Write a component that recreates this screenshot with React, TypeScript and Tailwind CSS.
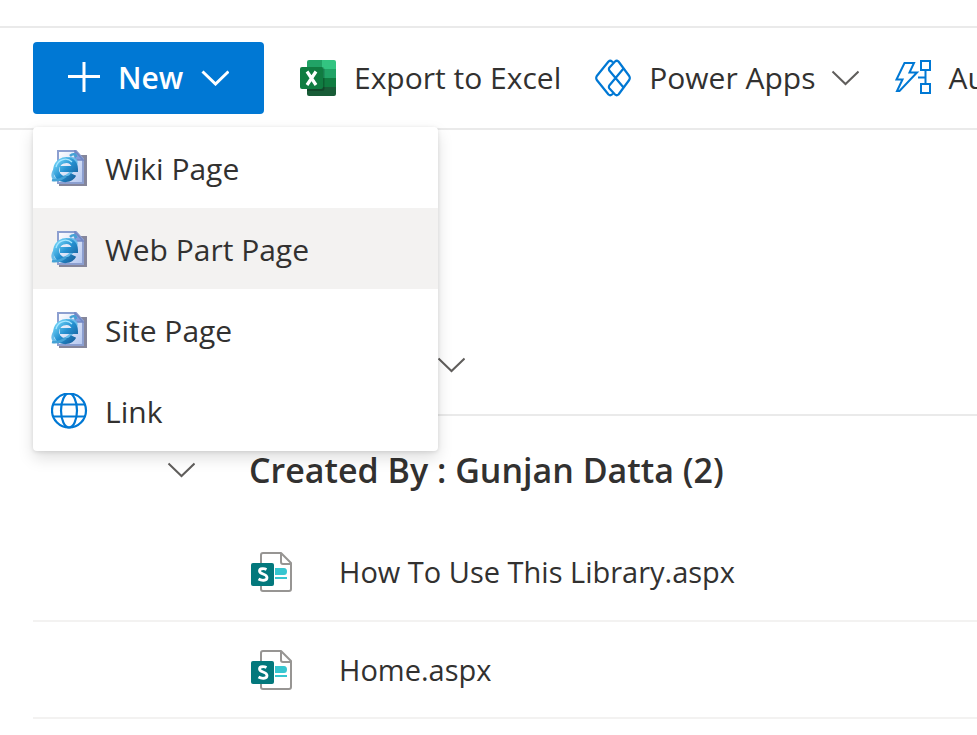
import type { ReactNode } from 'react';

function Chevron({ className = '' }: { className?: string }) {
  return (
    <svg className={className} width="28" height="16" viewBox="0 0 28 16" fill="none" stroke="currentColor" aria-hidden="true">
      <path d="M1.500 1.500 14.500 14 27.500 1.500" />
    </svg>
  );
}

function PlusIcon() {
  return (
    <svg width="32" height="32" viewBox="0 0 32 32" fill="none" stroke="currentColor" strokeWidth="3" aria-hidden="true">
      <path d="M16 0v30M0 14.500h32" />
    </svg>
  );
}

function ExcelIcon() {
  return (
    <svg width="36" height="36" viewBox="0 0 36 36" aria-hidden="true">
      <clipPath id="sheet"><rect x="7" width="29" height="36" rx="2" /></clipPath>
      <g clipPath="url(#sheet)">
        <path fill="#21a366" d="M7 0h15v9H7z" />
        <path fill="#33c481" d="M22 0h14v9H22z" />
        <path fill="#107c41" d="M7 9h15v9H7z" />
        <path fill="#21a366" d="M22 9h14v9H22z" />
        <path fill="#185c37" d="M7 18h15v18H7z" />
        <path fill="#107c41" d="M22 18h14v9H22z" />
        <path fill="#185c37" d="M22 27h14v9H22z" />
        <path fill="#000" opacity=".22" d="M7 7h15q2.500 0 2.500 2.500V28.500q0 2.500-2.500 2.500H7z" />
      </g>
      <rect y="7" width="23" height="22" rx="2" fill="#107c41" />
      <path d="m7 11.500 9 13.500M16 11.500 7 25" stroke="#fff" strokeWidth="3.200" />
    </svg>
  );
}

function PowerAppsIcon() {
  return (
    <svg width="36" height="38" viewBox="0 0 36 38" fill="none" stroke="#0078d4" strokeWidth="2.200" strokeLinejoin="round" aria-hidden="true">
      <path d="M18 3.500 17 2.500Q15.200 1 13.500 2.500L1.800 17Q.600 19 1.800 21l11.700 14.500q1.700 1.500 3.500 0L18 34.500" />
      <path d="M20 2.500q1.700-1.500 3.500 0L34.200 17q1.200 2 0 4L23.500 35.500q-1.800 1.500-3.500 0L14.500 29.500q-1.200-1.500 0-3.300L28.500 9.500M20 2.500 14.500 8.500q-1.200 1.500 0 3.300L28.500 28.500" />
    </svg>
  );
}

function AutomateIcon() {
  return (
    <svg width="37" height="36" viewBox="0 0 37 36" fill="none" stroke="#0078d4" strokeWidth="2" aria-hidden="true">
      <path d="M9.500 3H19l-4.500 9.500H22L4.500 31H2l5.500-11.500H1.500Z" />
      <path d="M26 1h9v9h-9zM26 24h9v9h-9zM30.500 10v14M23 17.500h7.500" />
    </svg>
  );
}

function WebPageIcon() {
  return (
    <svg width="38" height="38" viewBox="0 0 38 38" aria-hidden="true">
      <defs>
        <linearGradient id="paper" x1="0" y1="0" x2="1" y2="1">
          <stop stopColor="#fff" /><stop offset="1" stopColor="#b3c6ef" />
        </linearGradient>
        <linearGradient id="explorer" x1="0" y1="0" x2="1" y2="1">
          <stop stopColor="#72d5f8" /><stop offset=".5" stopColor="#2590d0" /><stop offset="1" stopColor="#17629e" />
        </linearGradient>
      </defs>
      <path fill="#85869b" d="M8 5h28v31H8z" />
      <path fill="url(#paper)" stroke="#8c9fd0" strokeWidth="2" d="M7 1h18l7 8v24H7z" />
      <path fill="#819ddd" stroke="#7187c4" strokeWidth="1.500" d="M24 1v9h8Z" />
      <ellipse cx="13.500" cy="19" rx="14" ry="7" transform="rotate(-40 13.500 19)" fill="none" stroke="#68bce9" strokeWidth="3" />
      <path fill="none" stroke="url(#explorer)" strokeWidth="6" d="M22.500 24.500c-3 6-12 6-15.500 1-4-6-1-13 5-15 7-2 12 2 12 8.500H9" />
      <path fill="none" stroke="#a6e6ff" strokeWidth="1.200" d="M5 17c2-8 11-10 16-5" />
      <path fill="none" stroke="#45a2d5" strokeWidth="2.500" d="M1 30c5 1 10-1 14-4M19 6c3-3 6-2 6 1" />
    </svg>
  );
}

function LinkIcon() {
  return (
    <svg width="38" height="38" viewBox="0 1 38 38" fill="none" stroke="#0078d4" strokeWidth="2.200" aria-hidden="true">
      <circle cx="18" cy="18.500" r="17" />
      <ellipse cx="18" cy="18.500" rx="8" ry="17" />
      <path d="M2 12.500h32M2 24.500h32" />
    </svg>
  );
}

function SharePointFileIcon() {
  return (
    <svg width="42" height="42" viewBox="0 0 42 42" aria-hidden="true">
      <path fill="#fff" stroke="#979593" strokeWidth="2" strokeLinejoin="round" d="M12 2h18l10 10v26q0 2-2 2H12q-2 0-2-2V4q0-2 2-2Z" />
      <path fill="none" stroke="#979593" strokeWidth="2" d="M30 2v9q0 2 2 2h8" />
      <path fill="#37c6d0" d="M24 17h9q3 0 3 3.500T33 24h-9zM24 26h12v2H24z" />
      <rect y="12" width="23" height="23" rx="2" fill="#03787c" />
      <path fill="none" stroke="#fff" strokeWidth="2.800" d="M15.500 18.500c-2-1-7-1.500-7 1.500 0 3.500 7.500 2.500 7.500 6.500 0 3.500-5.500 3.300-8.500 1.500" />
    </svg>
  );
}

function MenuItem({ icon, label, active = false }: { icon: ReactNode; label: string; active?: boolean }) {
  return (
    <button role="menuitem" className={`flex h-[81px] w-full items-center gap-4 pl-[18px] pt-0.5 text-left hover:bg-[#f3f2f1] ${active ? 'bg-[#f3f2f1]' : ''}`}>
      {icon}
      <span>{label}</span>
    </button>
  );
}

const files = ['How To Use This Library.aspx', 'Home.aspx'];

export default function App() {
  return (
    <main className="min-h-screen overflow-hidden bg-white pt-[26px] font-['Open_Sans',sans-serif] text-[30px] leading-10 text-[#323130]">
      <header className="flex h-[104px] items-center border-y-2 border-[#eaeaea] pl-[33px] whitespace-nowrap">
        <div className="relative z-10 mr-9 shrink-0">
          <button aria-haspopup="menu" aria-expanded="true" className="flex h-[72px] w-[231px] items-center rounded bg-[#0078d4] pl-[35px] font-semibold text-white">
            <PlusIcon />
            <span className="ml-[18px]">New</span>
            <Chevron className="ml-[18px] stroke-3" />
          </button>
          <div role="menu" className="absolute top-[85px] left-0 w-[405px] overflow-hidden rounded bg-white shadow-[0_7px_16px_rgba(0,0,0,0.13),0_1px_4px_rgba(0,0,0,0.11)]">
            <MenuItem icon={<WebPageIcon />} label="Wiki Page" />
            <MenuItem icon={<WebPageIcon />} label="Web Part Page" active />
            <MenuItem icon={<WebPageIcon />} label="Site Page" />
            <MenuItem icon={<LinkIcon />} label="Link" />
          </div>
        </div>
        <button className="mr-[34px] flex shrink-0 items-center gap-[18px]">
          <ExcelIcon />
          <span>Export to Excel</span>
        </button>
        <button className="mr-9 flex shrink-0 items-center gap-[18px]">
          <PowerAppsIcon />
          <span className="-mr-0.5">Power Apps</span>
          <Chevron className="stroke-2 text-[#605e5c]" />
        </button>
        <button className="flex shrink-0 items-center gap-4">
          <AutomateIcon />
          <span>Automate</span>
        </button>
      </header>

      <div className="pt-[200px] pl-[33px]">
        <table className="w-full table-fixed border-collapse text-left">
          <colgroup>
            <col className="w-[218px]" />
            <col className="w-[88px]" />
            <col />
          </colgroup>
          <thead>
            <tr className="h-[85px] border-b-2 border-[#eaeaea]">
              <td colSpan={2} />
              <th scope="col">
                <button aria-label="Sort by name" className="ml-[98px] block pb-3.5">
                  <Chevron className="stroke-2 text-[#605e5c]" />
                </button>
              </th>
            </tr>
          </thead>
          <tbody>
            <tr className="h-[109px]">
              <td>
                <button aria-label="Collapse group" className="ml-[134px] block">
                  <Chevron className="stroke-2 text-[#605e5c]" />
                </button>
              </td>
              <th scope="rowgroup" colSpan={2} className="text-[34px] font-semibold">
                <span className="-ml-0.5">Created By : Gunjan Datta (2)</span>
              </th>
            </tr>
            {files.map((file) => (
              <tr key={file} className="h-[97px] border-b-2 border-[#f3f2f1]">
                <td />
                <td><SharePointFileIcon /></td>
                <td className="text-[29px]"><a href="#file">{file}</a></td>
              </tr>
            ))}
          </tbody>
        </table>
      </div>
    </main>
  );
}
